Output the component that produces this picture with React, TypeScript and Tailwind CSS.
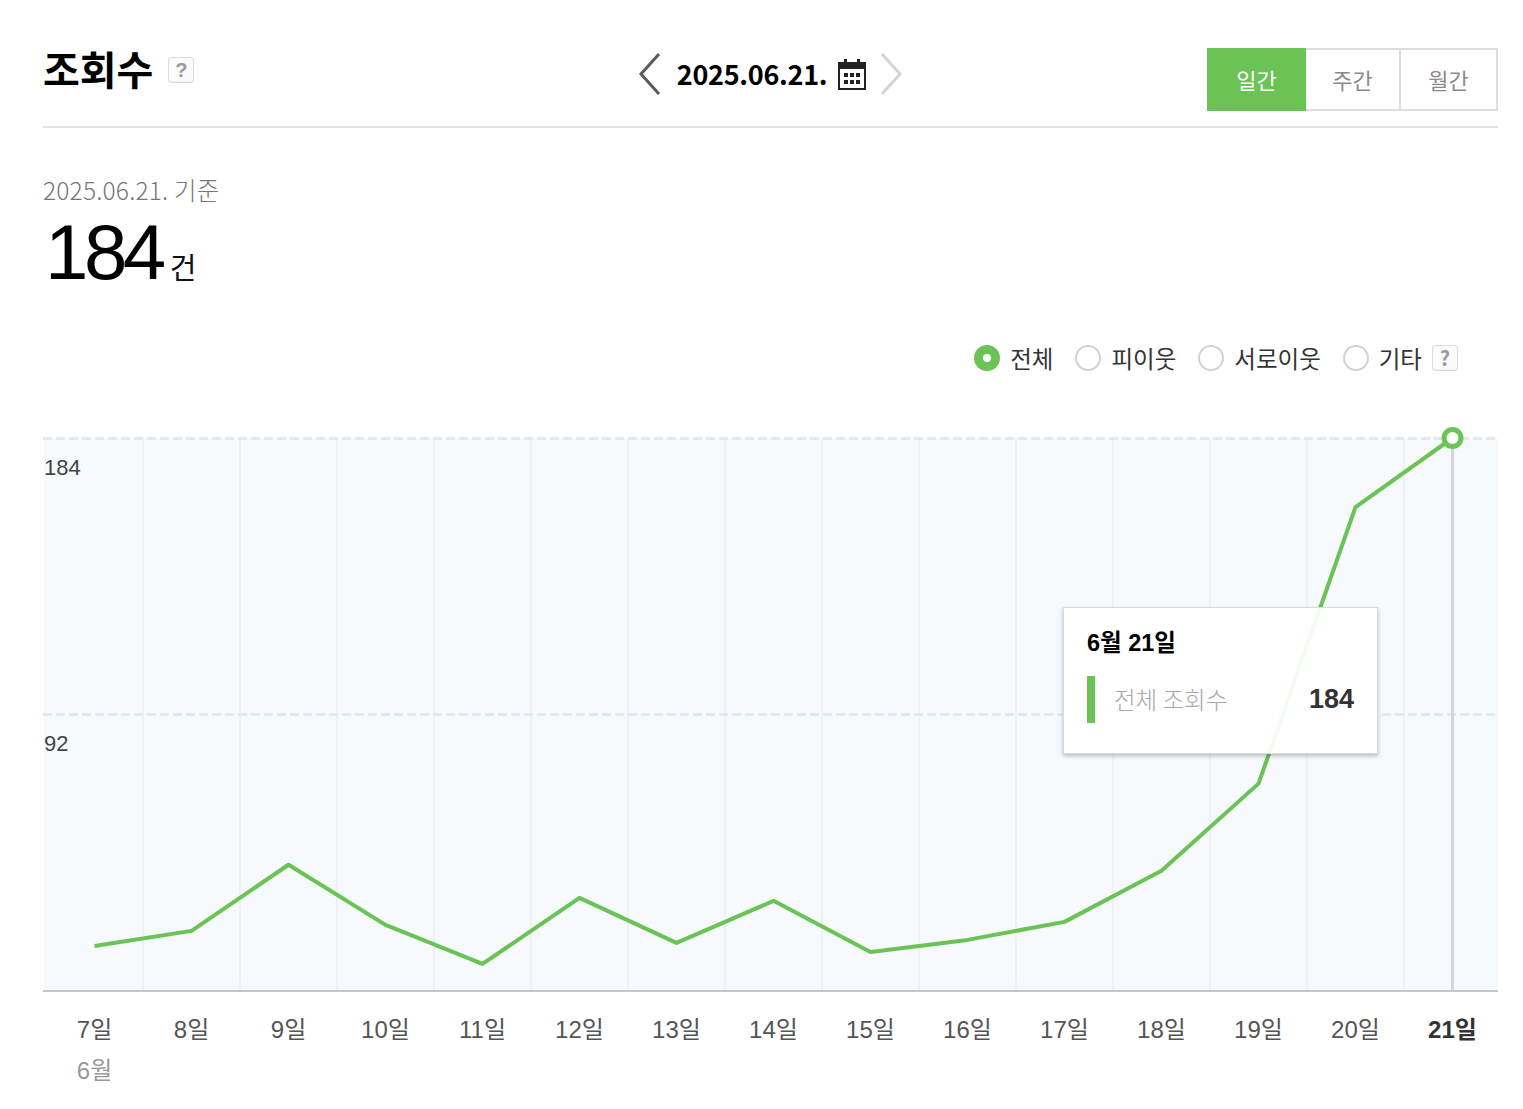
import React from "react";

const GREEN = "#6bc255";
const data = [15, 20, 42, 22, 9, 31, 16, 30, 13, 17, 23, 40, 69, 161, 184];
const W = 1455;
const H = 553;
const px = (i: number) => 51.5 + 97 * i;
const py = (v: number) => H - (v * H) / 184;
const days = ["7일", "8일", "9일", "10일", "11일", "12일", "13일", "14일", "15일", "16일", "17일", "18일", "19일", "20일", "21일"];

function QBox({ className = "" }: { className?: string }) {
  return (
    <span
      className={`inline-flex h-[26px] w-[26px] items-center justify-center rounded-[3px] border border-[#dcdcdc] bg-[#fbfbfb] text-[20px] font-bold leading-none text-[#999] shadow-[inset_0_-1px_0_rgba(0,0,0,0.04)] ${className}`}
    >
      ?
    </span>
  );
}

function Radio({ label, checked }: { label: string; checked?: boolean }) {
  return (
    <div className="flex items-center gap-[10px]">
      {checked ? (
        <span className="flex h-[26px] w-[26px] items-center justify-center rounded-full bg-[#6bc255]">
          <span className="h-[8px] w-[8px] rounded-full bg-white" />
        </span>
      ) : (
        <span className="h-[26px] w-[26px] rounded-full border-2 border-[#d2d2d2] bg-white" />
      )}
      <span className="text-[23.5px] leading-[26px] text-[#333]">{label}</span>
    </div>
  );
}

export default function App() {
  const points = data.map((v, i) => `${px(i)},${py(v)}`).join(" ");
  return (
    <div
      className="min-h-[1109px] bg-white pl-[43px] pr-[25px] pt-[48px]"
      style={{ fontFamily: '"Liberation Sans", "Noto Sans CJK KR", sans-serif' }}
    >
      {/* header */}
      <div className="grid h-[80px] grid-cols-[1fr_auto_1fr] items-start border-b-2 border-[#e3e3e3]">
        <div className="mt-[1px] flex items-center gap-[15px]">
          <h1 className="text-[40px] font-bold leading-[38px] text-black" style={{ fontFamily: '"Noto Sans CJK KR", sans-serif' }}>
            조회수
          </h1>
          <QBox className="mt-[3px]" />
        </div>
        <div className="mt-[5px] flex h-[42px] items-center">
          <svg width="24" height="44" viewBox="0 0 24 44" className="mr-[15px]">
            <polyline points="21,2 3,22 21,42" fill="none" stroke="#5a5a5a" strokeWidth="3" />
          </svg>
          <span className="text-[27px] font-bold leading-[32px] tracking-[-0.3px] text-black" style={{ fontFamily: '"Noto Sans CJK KR", sans-serif' }}>
            2025.06.21.
          </span>
          <svg width="30" height="34" viewBox="0 0 30 34" className="ml-[10px]">
            <rect x="2" y="6" width="26" height="26" fill="none" stroke="#222" strokeWidth="2" />
            <rect x="2" y="6" width="26" height="6" fill="#222" />
            <rect x="7" y="2" width="3" height="7" fill="#222" />
            <rect x="20" y="2" width="3" height="7" fill="#222" />
            <rect x="7" y="16" width="4" height="4" fill="#222" />
            <rect x="13" y="16" width="4" height="4" fill="#222" />
            <rect x="19" y="16" width="4" height="4" fill="#222" />
            <rect x="7" y="23" width="4" height="4" fill="#222" />
            <rect x="13" y="23" width="4" height="4" fill="#222" />
            <rect x="19" y="23" width="4" height="4" fill="#222" />
          </svg>
          <svg width="24" height="44" viewBox="0 0 24 44" className="ml-[12px]">
            <polyline points="3,2 21,22 3,42" fill="none" stroke="#d4d4d4" strokeWidth="3" />
          </svg>
        </div>
        <div className="flex justify-end">
          <div className="flex h-[63px] text-[22px]" style={{ fontFamily: '"Noto Sans CJK KR", sans-serif' }}>
            <div className="flex w-[99px] items-center justify-center bg-[#6bc255] text-white">일간</div>
            <div className="flex w-[95px] items-center justify-center border-y-2 border-r-2 border-[#dddddd] text-[#8a8a8a]">주간</div>
            <div className="flex w-[97px] items-center justify-center border-y-2 border-r-2 border-[#dddddd] text-[#8a8a8a]">월간</div>
          </div>
        </div>
      </div>

      {/* summary */}
      <div className="mt-[49px] text-[24.5px] leading-[26px] tracking-[0.2px] text-[#777]" style={{ fontFamily: '"Noto Sans CJK KR", sans-serif', fontWeight: 300 }}>
        2025.06.21. 기준
      </div>
      <div className="mt-[10px] flex items-baseline">
        <span className="pl-[2px] text-[78px] leading-[78px] tracking-[-4.5px] text-black">184</span>
        <span className="ml-[8px] text-[29px] text-[#111]" style={{ fontFamily: '"Noto Sans CJK KR", sans-serif' }}>건</span>
      </div>

      {/* radios */}
      <div className="mt-[54px] flex justify-end gap-[22px] pr-[40px]" style={{ fontFamily: '"Noto Sans CJK KR", sans-serif' }}>
        <Radio label="전체" checked />
        <Radio label="피이웃" />
        <Radio label="서로이웃" />
        <div className="flex items-center gap-[10px]">
          <Radio label="기타" />
          <QBox />
        </div>
      </div>

      {/* chart */}
      <div className="relative mt-[67px] h-[555px] w-[1455px]">
        <svg width={W} height={555} viewBox={`0 0 ${W} 555`} className="absolute left-0 top-0 overflow-visible">
          <rect x="1" y="0" width={W - 1} height={H} fill="#f6fafd" />
          {Array.from({ length: 14 }).map((_, k) => (
            <line key={k} x1={100 + 97 * k} x2={100 + 97 * k} y1="0" y2={H} stroke="#ecf2f6" strokeWidth="2" />
          ))}
          <line x1="0" x2={W} y1="0.5" y2="0.5" stroke="#e4e9ed" strokeWidth="3" strokeDasharray="9 4" />
          <line x1="0" x2={W} y1="276.5" y2="276.5" stroke="#e4e9ed" strokeWidth="3" strokeDasharray="9 4" />
          <line x1={px(14)} x2={px(14)} y1="0" y2={H} stroke="#d3d6da" strokeWidth="3" />
          <line x1="0" x2={W} y1={H} y2={H} stroke="#c3c7cb" strokeWidth="2" />
          <polyline points={points} fill="none" stroke={GREEN} strokeWidth="4" strokeLinejoin="round" />
          <circle cx={px(14)} cy={py(184)} r="8.5" fill="#fff" stroke={GREEN} strokeWidth="5" />
        </svg>
        <div className="absolute left-[1px] top-[17px] text-[22px] leading-[26px] text-[#444]">184</div>
        <div className="absolute left-[1px] top-[293px] text-[22px] leading-[26px] text-[#444]">92</div>

        {/* tooltip */}
        <div className="absolute left-[1020px] top-[169px] h-[147px] w-[315px] border border-[#dadada] bg-white/[0.93] px-[23px] pt-[20px] shadow-[0_2px_4px_rgba(0,0,0,0.25)]">
          <div className="text-[23.5px] font-bold leading-[30px] text-black" style={{ fontFamily: '"Liberation Sans", "Noto Sans CJK KR", sans-serif' }}>
            6월 21일
          </div>
          <div className="mt-[18px] flex h-[47px] items-center">
            <span className="h-[47px] w-[8px] bg-[#6bc255]" />
            <span className="ml-[19px] text-[23.5px] text-[#a8a8a8]" style={{ fontFamily: '"Noto Sans CJK KR", sans-serif', fontWeight: 300 }}>
              전체 조회수
            </span>
            <span className="ml-auto text-[27px] font-bold text-[#333]">184</span>
          </div>
        </div>
      </div>

      {/* x labels */}
      <div className="mt-[23px] grid w-[1458px] grid-cols-[repeat(15,97px)] pl-[3px] text-[24px] leading-[28px] text-[#555]">
        {days.map((d, i) => (
          <div key={d} className="flex flex-col items-center">
            <span className={i === 14 ? "font-bold text-[#333]" : ""}>{d}</span>
            {i === 0 && <span className="mt-[13px] text-[#999]">6월</span>}
          </div>
        ))}
      </div>
    </div>
  );
}
